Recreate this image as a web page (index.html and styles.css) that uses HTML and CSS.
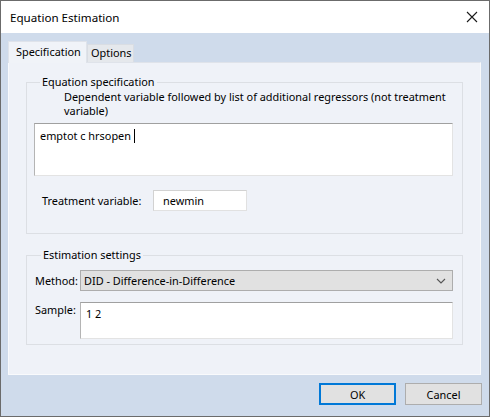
FILE: index.html
```html
<!DOCTYPE html>
<html>
<head>
<meta charset="utf-8">
<link rel="stylesheet" href="styles.css">
</head>
<body>
<div class="window">
  <div class="titlebar">
    <span class="title">Equation Estimation</span>
    <svg class="close" width="12" height="12" viewBox="0 0 12 12"><path d="M1 1 L11 11 M11 1 L1 11" stroke="#1a1a1a" stroke-width="1.1" fill="none"/></svg>
  </div>
  <div class="client">
    <div class="tabs">
      <div class="tab active">Specification</div>
      <div class="tab">Options</div>
    </div>
    <div class="panel">
      <fieldset class="group group-eq">
        <legend>Equation specification</legend>
        <div class="desc">Dependent variable followed by list of additional regressors (not treatment<br>variable)</div>
        <div class="textbox eqbox">emptot c hrsopen <span class="caret"></span></div>
        <div class="treat-row">
          <span class="treat-label">Treatment variable:</span>
          <div class="textbox treat-input">newmin</div>
        </div>
      </fieldset>
      <fieldset class="group group-est">
        <legend>Estimation settings</legend>
        <div class="est-grid">
          <span class="lbl">Method:</span>
          <div class="select">
            <span>DID - Difference-in-Difference</span>
            <svg class="chev" width="10" height="6" viewBox="0 0 10 6"><path d="M1 1 L5 5 L9 1" stroke="#555" stroke-width="1.1" fill="none"/></svg>
          </div>
          <span class="lbl lbl-top">Sample:</span>
          <div class="textbox samplebox">1 2</div>
        </div>
      </fieldset>
    </div>
    <div class="buttons">
      <div class="btn btn-default">OK</div>
      <div class="btn">Cancel</div>
    </div>
  </div>
</div>
</body>
</html>
```

FILE: styles.css
```css
* { box-sizing: border-box; }
html, body { margin: 0; padding: 0; }
body {
  font-family: "Noto Sans", "Open Sans", sans-serif;
  font-size: 10.9px;
  color: #000;
  background: #fff;
  white-space: nowrap;
}
.window {
  width: 490px;
  height: 417px;
  border: 1px solid #6b6b6b;
  display: flex;
  flex-direction: column;
  background: #cfdbeb;
}
.titlebar {
  height: 32px;
  background: #fff;
  display: flex;
  align-items: center;
  justify-content: space-between;
  padding: 0 10px 0 9px;
  flex: none;
}
.title { font-size: 11.6px; }
.close { margin-right: 1px; }
.client {
  flex: 1;
  display: flex;
  flex-direction: column;
  padding: 8px 7px 0 7px;
}
.tabs {
  display: flex;
  align-items: flex-end;
  height: 21px;
}
.tab {
  height: 18px;
  padding: 0 3px;
  width: 47px;
  background: #e5e8ec;
  border: 1px solid #d9dde3;
  border-bottom: none;
  line-height: 16px;
}
.tab.active {
  width: 79px;
  padding: 0 0 0 7px;
  background: #f0f3f8;
  border-color: #dfe3ea;
  line-height: 20px;
  position: relative;
  z-index: 1;
  margin-bottom: -1px;
  height: 22px;
}
.panel {
  width: 473px;
  height: 313px;
  background: #eff2f8;
  border: 1px solid #f9fafc;
  border-top-color: #dfe3ea;
  padding: 11px 17px 0 17px;
  display: flex;
  flex-direction: column;
}
.group {
  margin: 0;
  padding: 0;
  border: 1px solid #dcdfe4;
  border-radius: 0;
  min-width: 0;
}
.group legend {
  margin-left: 6px;
  padding: 0 2px;
  line-height: 16px;
}
.group-eq { height: 160px; padding: 0 9px 0 7px; }
.desc {
  padding-left: 30px;
  line-height: 14px;
}
.textbox {
  background: #fff;
  border: 1px solid #e3e3e3;
  border-top-color: #a0a0a0;
  border-left-color: #b4b4b4;
}
.eqbox {
  margin-top: 5px;
  height: 53px;
  padding: 4px 5px;
  line-height: 16px;
}
.caret {
  display: inline-block;
  width: 1px;
  height: 14px;
  background: #000;
  vertical-align: -3px;
}
.treat-row {
  margin-top: 14px;
  display: flex;
  align-items: center;
  padding-left: 8px;
}
.treat-label { width: 111px; }
.treat-input {
  width: 94px;
  height: 21px;
  padding: 0 9px;
  line-height: 19px;
  border-color: #e1e1e1;
  border-top-color: #d2d2d2;
  border-left-color: #d2d2d2;
}
.group-est { margin-top: 13px; height: 98px; padding: 0 9px 0 8px; }
.est-grid {
  margin-top: 7px;
  display: grid;
  grid-template-columns: 45px 1fr;
  row-gap: 11px;
  align-items: center;
}
.lbl-top { align-self: start; }
.select {
  height: 21px;
  background: #e1e1e1;
  border: 1px solid #adadad;
  display: flex;
  align-items: center;
  justify-content: space-between;
  padding: 0 6px 0 3px;
}
.samplebox {
  height: 37px;
  padding: 3px 5px;
  line-height: 16px;
}
.buttons {
  display: flex;
  justify-content: flex-end;
  gap: 9px;
  margin-top: 8px;
}
.btn {
  width: 77px;
  height: 22px;
  background: #e1e1e1;
  border: 1px solid #adadad;
  display: flex;
  align-items: center;
  justify-content: center;
}
.btn-default {
  border: 2px solid #0078d7;
}
```
